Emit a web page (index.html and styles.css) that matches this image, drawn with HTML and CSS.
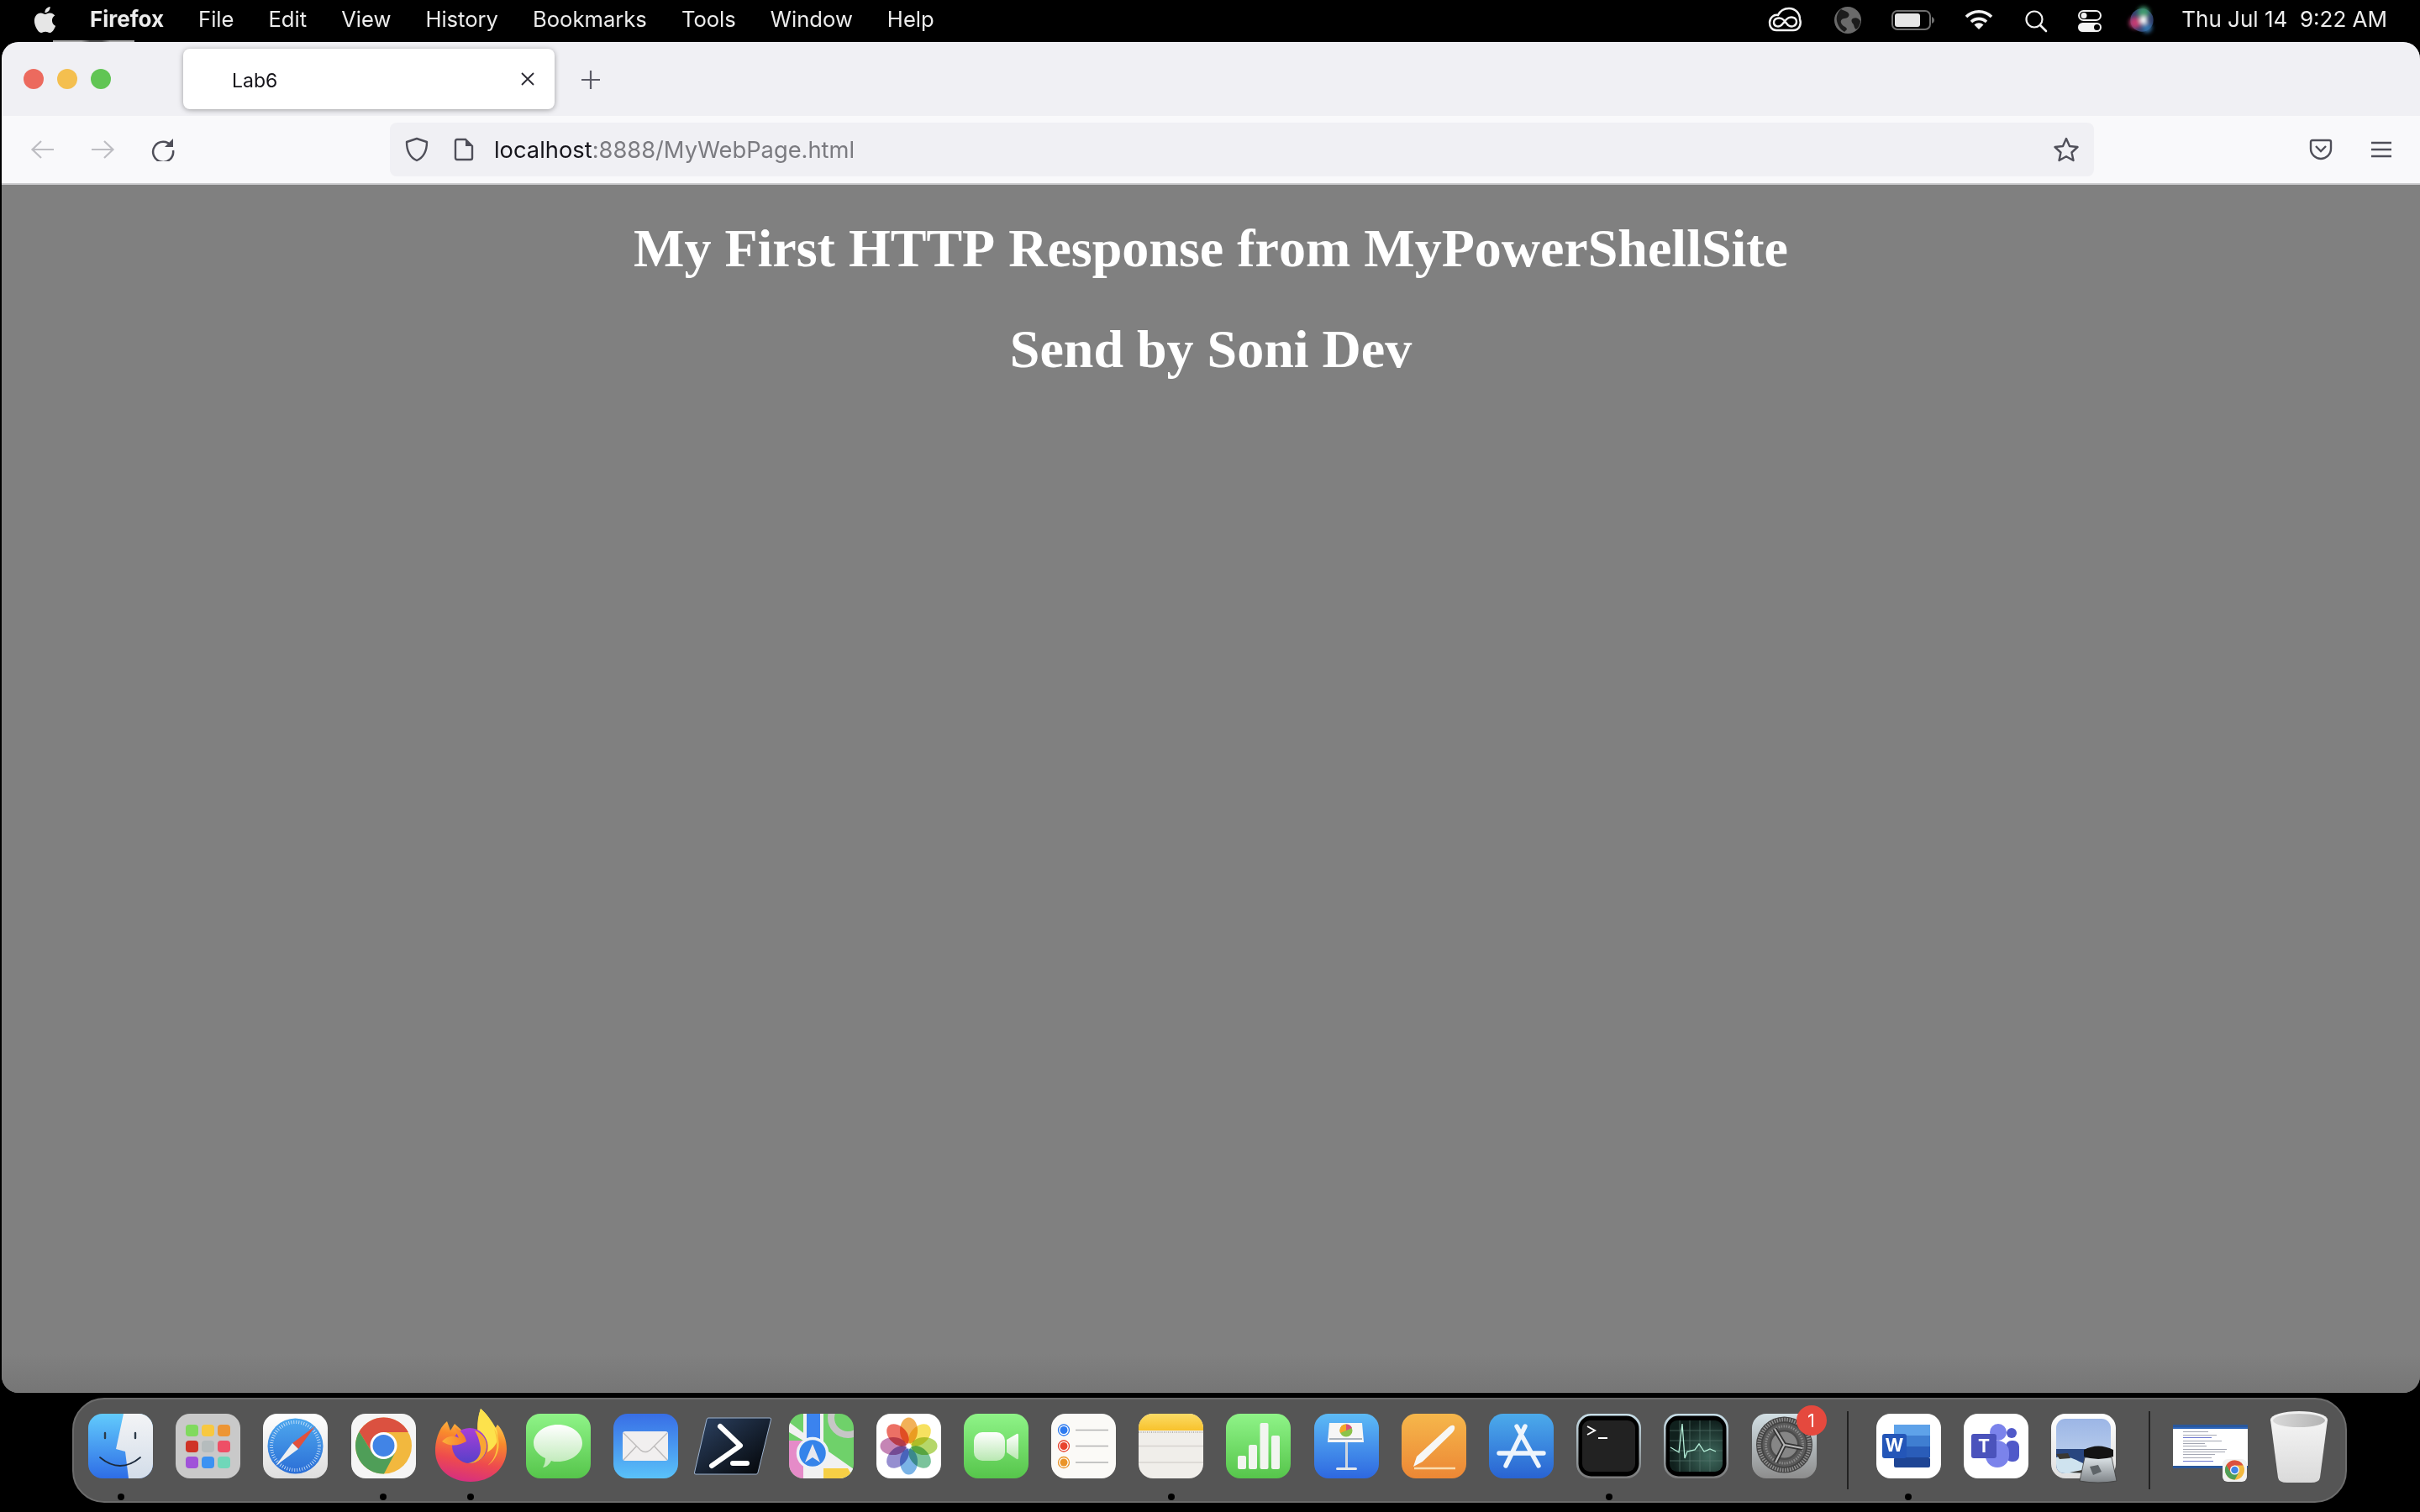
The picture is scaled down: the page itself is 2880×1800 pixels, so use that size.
FILE: index.html
```html
<!DOCTYPE html>
<html lang="en">
<head>
  <meta charset="UTF-8">
  <title>Lab6</title>
  <link rel="stylesheet" href="styles.css">
</head>
<body>

<!-- shared gradients and clip for the dock icons -->
<svg class="svg-defs" aria-hidden="true">
  <defs>
    <clipPath id="sq"><rect width="77" height="77" rx="17"/></clipPath>
    <linearGradient id="gFinderL" x1="0" y1="0" x2="0" y2="1"><stop offset="0" stop-color="#62cbfc"/><stop offset="1" stop-color="#2e6de6"/></linearGradient>
    <linearGradient id="gFinderR" x1="0" y1="0" x2="0" y2="1"><stop offset="0" stop-color="#f3f4f6"/><stop offset="1" stop-color="#d3dde9"/></linearGradient>
    <linearGradient id="gWhite" x1="0" y1="0" x2="0" y2="1"><stop offset="0" stop-color="#ffffff"/><stop offset="1" stop-color="#dedede"/></linearGradient>
    <linearGradient id="gSafari" x1="0" y1="0" x2="0" y2="1"><stop offset="0" stop-color="#4ea8ee"/><stop offset="1" stop-color="#2b6ed6"/></linearGradient>
    <linearGradient id="gGreen" x1="0" y1="0" x2="0" y2="1"><stop offset="0" stop-color="#8ff488"/><stop offset="1" stop-color="#56c54b"/></linearGradient>
    <linearGradient id="gBubble" x1="0" y1="0" x2="0" y2="1"><stop offset="0" stop-color="#ffffff"/><stop offset="1" stop-color="#b9e8b2"/></linearGradient>
    <linearGradient id="gMail" x1="0" y1="0" x2="0" y2="1"><stop offset="0" stop-color="#386ee6"/><stop offset="1" stop-color="#5ac2f9"/></linearGradient>
    <linearGradient id="gPs" x1="0" y1="0" x2="1" y2="1"><stop offset="0" stop-color="#2d4364"/><stop offset="1" stop-color="#020304"/></linearGradient>
    <linearGradient id="gKeynote" x1="0" y1="0" x2="0" y2="1"><stop offset="0" stop-color="#5dbbf6"/><stop offset="1" stop-color="#2e68e0"/></linearGradient>
    <linearGradient id="gPages" x1="0" y1="0" x2="0" y2="1"><stop offset="0" stop-color="#f6b74b"/><stop offset="1" stop-color="#ec8735"/></linearGradient>
    <linearGradient id="gStore" x1="0" y1="0" x2="0" y2="1"><stop offset="0" stop-color="#4cabeb"/><stop offset="1" stop-color="#2963d2"/></linearGradient>
    <linearGradient id="gFrame" x1="0" y1="0" x2="0" y2="1"><stop offset="0" stop-color="#c8dfe9"/><stop offset="1" stop-color="#7a7a7a"/></linearGradient>
    <linearGradient id="gPrefs" x1="0" y1="0" x2="0" y2="1"><stop offset="0" stop-color="#d2dfe4"/><stop offset="1" stop-color="#8d8d8d"/></linearGradient>
    <linearGradient id="gNotes" x1="0" y1="0" x2="0" y2="1"><stop offset="0" stop-color="#fbdc66"/><stop offset="1" stop-color="#f8c22c"/></linearGradient>
    <linearGradient id="gSky" x1="0" y1="0" x2="0" y2="1"><stop offset="0" stop-color="#9cb6e6"/><stop offset="1" stop-color="#c4d6ee"/></linearGradient>
    <linearGradient id="gTrash" x1="0" y1="0" x2="0" y2="1"><stop offset="0" stop-color="#f4f4f4"/><stop offset="1" stop-color="#dadada"/></linearGradient>
    <linearGradient id="gTrashIn" x1="0" y1="0" x2="1" y2="0"><stop offset="0" stop-color="#d8d8d8"/><stop offset="1" stop-color="#b4b4b4"/></linearGradient>
    <linearGradient id="gFox" x1="0.6" y1="0" x2="0.4" y2="1"><stop offset="0" stop-color="#fff05a"/><stop offset="0.4" stop-color="#f98a2c"/><stop offset="0.72" stop-color="#ee4a4e"/><stop offset="1" stop-color="#d62f80"/></linearGradient>
    <linearGradient id="gBall" x1="0" y1="0" x2="0" y2="1"><stop offset="0" stop-color="#a93fd8"/><stop offset="1" stop-color="#5740c9"/></linearGradient>
    <linearGradient id="gWing" x1="0" y1="0" x2="1" y2="0"><stop offset="0" stop-color="#fbb13a"/><stop offset="1" stop-color="#f67b2b"/></linearGradient>
    <linearGradient id="gGlass" x1="0" y1="0" x2="0" y2="1"><stop offset="0" stop-color="#dde4e8"/><stop offset="1" stop-color="#7f8488"/></linearGradient>
    <radialGradient id="gScreen" cx="0.75" cy="0.7" r="0.7"><stop offset="0" stop-color="#3f6a5e"/><stop offset="1" stop-color="#10201d"/></radialGradient>
    <filter id="soft" x="-30%" y="-30%" width="160%" height="160%"><feGaussianBlur stdDeviation="2.4"/></filter>
  </defs>
</svg>

<header class="menubar">
  <svg class="apple" viewBox="0 0 24 24"><path d="M12.152 6.896c-.948 0-2.415-1.078-3.96-1.04-2.04.027-3.91 1.183-4.961 3.014-2.117 3.675-.546 9.103 1.519 12.09 1.013 1.454 2.208 3.09 3.792 3.039 1.52-.065 2.09-.987 3.935-.987 1.831 0 2.35.987 3.96.948 1.637-.026 2.676-1.48 3.676-2.948 1.156-1.688 1.636-3.325 1.662-3.415-.039-.013-3.182-1.221-3.22-4.857-.026-3.04 2.48-4.494 2.597-4.559-1.429-2.09-3.623-2.324-4.39-2.376-2-.156-3.675 1.09-4.61 1.09zM15.53 3.83c.843-1.012 1.4-2.427 1.245-3.83-1.207.052-2.662.805-3.532 1.818-.78.896-1.454 2.338-1.273 3.714 1.338.104 2.715-.688 3.559-1.701"/></svg>
  <nav class="menu">
    <span class="menu-app">Firefox</span>
    <span>File</span>
    <span>Edit</span>
    <span>View</span>
    <span>History</span>
    <span>Bookmarks</span>
    <span>Tools</span>
    <span>Window</span>
    <span>Help</span>
  </nav>
  <div class="status">
    <svg class="status-icons" viewBox="0 0 470 50">
      <!-- creative cloud -->
      <g fill="none" stroke="#f2f2f2" stroke-width="2.4">
        <path d="M15 36C9 36 7 31 7 27 7 21 12 17 17 18 20 12 25 10 30 10 38 10 43 16 43 23 45 28 43 36 35 36Z"/>
        <path d="M12 27C12 21 20 20 24 24L29 30C33 33 39 31 39 26 39 20 31 19 27 23L21 30C17 33 12 31 12 27Z"/>
      </g>
      <!-- globe -->
      <circle cx="100" cy="24" r="16" fill="#6a6a6a"/>
      <path d="M92 11c4 2 7 2 9 5s-2 6-5 6-6 3-3 7 5 2 6 6l-3 3c-5-3-8-8-9-13s1-11 5-14zM106 22c4-2 7 0 9 3 0 4-2 8-5 10-3-2-2-5-4-7s-2-5 0-6z" fill="#1c1c1c"/>
      <!-- battery -->
      <rect x="153" y="13" width="45" height="22" rx="6" fill="none" stroke="#6f6f6f" stroke-width="2"/>
      <rect x="156" y="16" width="30" height="16" rx="3" fill="#e6e6e6"/>
      <path d="M200 20c2 1 3 2 3 4s-1 3-3 4z" fill="#6f6f6f"/>
      <!-- wifi -->
      <g fill="none" stroke="#f2f2f2" stroke-width="3.6">
        <path d="M241 20A21 21 0 0 1 271 20"/>
        <path d="M247 26A13 13 0 0 1 265 26"/>
      </g>
      <path d="M250.500 29.500A8 8 0 0 1 261.500 29.500L256 35Z" fill="#f2f2f2"/>
      <!-- search -->
      <circle cx="322" cy="23" r="9.500" fill="none" stroke="#f2f2f2" stroke-width="2.200"/>
      <path d="M329 30L336 37" stroke="#f2f2f2" stroke-width="2.600" stroke-linecap="round"/>
      <!-- control centre -->
      <rect x="375" y="13" width="26" height="11" rx="5.500" fill="none" stroke="#f2f2f2" stroke-width="2"/>
      <circle cx="381" cy="18.500" r="3.500" fill="#f2f2f2"/>
      <rect x="374" y="27" width="28" height="11" rx="5.500" fill="#f2f2f2"/>
      <circle cx="396.500" cy="32.500" r="3.500" fill="#000"/>
      <!-- siri -->
      <circle cx="450" cy="24" r="13.700" fill="#2f3f6b"/>
      <g filter="url(#soft)">
        <circle cx="452" cy="15" r="7" fill="#3f9a70"/>
        <circle cx="442" cy="27" r="7" fill="#c23a72"/>
        <circle cx="456" cy="33" r="6" fill="#3574ad"/>
        <circle cx="452" cy="24" r="4.500" fill="#ffffff"/>
      </g>
    </svg>
    <span class="clock">Thu Jul 14&nbsp; 9:22 AM</span>
  </div>
  <div class="sliver"></div>
</header>

<main class="window">
  <div class="tabbar">
    <div class="lights">
      <span class="light light-red"></span>
      <span class="light light-yellow"></span>
      <span class="light light-green"></span>
    </div>
    <div class="tab">
      <span class="tab-title">Lab6</span>
      <svg class="tab-close" viewBox="0 0 18 18"><path d="M2 2L16 16M16 2L2 16" stroke="#2b2a33" stroke-width="1.800"/></svg>
    </div>
    <svg class="tab-new" viewBox="0 0 24 24"><path d="M12 1V23M1 12H23" stroke="#5b5b66" stroke-width="2.200"/></svg>
  </div>

  <div class="toolbar">
    <svg class="nav-btn" viewBox="0 0 29 24"><path d="M28 12H3M13 2L2.500 12 13 22" fill="none" stroke="#bdbdc2" stroke-width="2.200"/></svg>
    <svg class="nav-btn" viewBox="0 0 29 24"><path d="M1 12H26M16 2L26.500 12 16 22" fill="none" stroke="#bdbdc2" stroke-width="2.200"/></svg>
    <svg class="nav-btn nav-reload" viewBox="0 0 29 28"><path d="M24 10A12 12 0 1 0 26 15" fill="none" stroke="#4f4f59" stroke-width="2.500"/><path d="M26 1V11H16Z" fill="#4f4f59"/></svg>
    <div class="urlbar">
      <svg class="url-shield" viewBox="0 0 28 30"><path d="M14 2L26 6C26 16 23 24 14 28 5 24 2 16 2 6Z" fill="none" stroke="#4f4f59" stroke-width="2.400" stroke-linejoin="round"/></svg>
      <svg class="url-page" viewBox="0 0 24 28"><path d="M4 2H14L22 10V24Q22 26 20 26H4Q2 26 2 24V4Q2 2 4 2Z" fill="none" stroke="#4f4f59" stroke-width="2.400"/><path d="M14 2V10H22Z" fill="#4f4f59"/></svg>
      <span class="url-text">localhost<span class="url-rest">:8888/MyWebPage.html</span></span>
      <svg class="url-star" viewBox="0 0 32 32"><path d="M16 3L20 12 29.500 13 22.500 19.500 24.500 29 16 24.200 7.500 29 9.500 19.500 2.500 13 12 12Z" fill="none" stroke="#4f4f59" stroke-width="2.400" stroke-linejoin="round"/></svg>
    </div>
    <div class="tools">
      <svg class="tool-pocket" viewBox="0 0 28 26"><path d="M4 2H24Q26 2 26 4V12C26 19 20 24 14 24S2 19 2 12V4Q2 2 4 2Z" fill="none" stroke="#4f4f59" stroke-width="2.400"/><path d="M8 9L14 15 20 9" fill="none" stroke="#4f4f59" stroke-width="2.400"/></svg>
      <svg class="tool-menu" viewBox="0 0 24 20"><path d="M0 2H24M0 10H24M0 18H24" stroke="#4f4f59" stroke-width="2.400"/></svg>
    </div>
  </div>

  <div class="page">
    <h1>My First HTTP Response from MyPowerShellSite</h1>
    <h1>Send by Soni Dev</h1>
  </div>
</main>

<footer class="dock">
  <!-- finder -->
  <div class="dock-app running">
    <svg viewBox="0 0 77 77"><g clip-path="url(#sq)">
      <rect width="77" height="77" fill="url(#gFinderL)"/>
      <path d="M42 0H77V77H48L44 45 33 42Z" fill="url(#gFinderR)"/>
      <path d="M20 23V29M56 23V29" stroke="#2c3a48" stroke-width="2.400" stroke-linecap="round"/>
      <path d="M14 52Q38 72 62 52" fill="none" stroke="#1c2a3c" stroke-width="1.800" stroke-linecap="round"/>
    </g></svg>
  </div>
  <!-- launchpad -->
  <div class="dock-app">
    <svg viewBox="0 0 77 77">
      <rect width="77" height="77" rx="17" fill="#c9c9c9"/>
      <rect x="12" y="13" width="15" height="14" rx="4" fill="#80da5e"/>
      <rect x="31" y="13" width="15" height="14" rx="4" fill="#f8c840"/>
      <rect x="50" y="13" width="15" height="14" rx="4" fill="#ed9534"/>
      <rect x="12" y="32" width="15" height="14" rx="4" fill="#cf3326"/>
      <rect x="31" y="32" width="15" height="14" rx="4" fill="#b5bcbd"/>
      <rect x="50" y="32" width="15" height="14" rx="4" fill="#ee4f66"/>
      <rect x="12" y="51" width="15" height="14" rx="4" fill="#a052d9"/>
      <rect x="31" y="51" width="15" height="14" rx="4" fill="#3b92f2"/>
      <rect x="50" y="51" width="15" height="14" rx="4" fill="#6fd7b9"/>
    </svg>
  </div>
  <!-- safari -->
  <div class="dock-app">
    <svg viewBox="0 0 77 77">
      <rect width="77" height="77" rx="17" fill="url(#gWhite)"/>
      <circle cx="38.500" cy="38.500" r="33" fill="url(#gSafari)"/>
      <circle cx="38.500" cy="38.500" r="28.500" fill="none" stroke="#d5e8fa" stroke-width="4" stroke-dasharray="0.800 2.200"/>
      <path d="M62 15L35 35 42 42Z" fill="#e2513d"/>
      <path d="M15 62L35 35 42 42Z" fill="#f0f0f0"/>
    </svg>
  </div>
  <!-- chrome -->
  <div class="dock-app running">
    <svg viewBox="0 0 77 77">
      <rect width="77" height="77" rx="17" fill="#f5f5f5"/>
      <circle cx="38.500" cy="38" r="33.500" fill="#f2b83e"/>
      <path d="M38.500 22H67.900A33.500 33.500 0 0 0 9.500 21.250L24.600 46Z" fill="#db5140"/>
      <path d="M9.500 21.250A33.500 33.500 0 0 0 39 71.500L52.400 46H24.600Z" fill="#4f9e58"/>
      <circle cx="38.500" cy="38" r="16" fill="#fff"/>
      <circle cx="38.500" cy="38" r="13" fill="#4184e6"/>
    </svg>
  </div>
  <!-- firefox -->
  <div class="dock-app running">
    <svg viewBox="0 0 77 77">
      <path d="M-4 44C-4 34-1 18 10 9L14 20 19 12 30 22C36 19 42 20 46 19 46 10 47 2 50-6 57 0 63 8 67 18L70 13C77 20 81 32 81 42 81 65 62 81 38 81 14 81-4 66-4 44Z" fill="url(#gFox)"/>
      <path d="M50-6C47 4 46 12 47 20 56 26 61 34 58 46 68 40 74 30 68 17 63 8 57 0 50-6Z" fill="#fde24c"/>
      <path d="M66 18C75 30 74 52 58 62 70 52 72 36 66 18Z" fill="#fbc23d"/>
      <circle cx="37" cy="38" r="21" fill="url(#gBall)"/>
      <path d="M4 33C10 26 18 25 24 29 22 24 20 20 19 16 26 20 32 26 33 33 24 38 14 40 4 33Z" fill="url(#gWing)"/>
      <path d="M43 20C52 23 58 31 57 40 56 52 46 60 35 59 48 57 52 46 49 36 48 30 46 25 43 20Z" fill="#f9a533"/>
    </svg>
  </div>
  <!-- messages -->
  <div class="dock-app">
    <svg viewBox="0 0 77 77">
      <rect width="77" height="77" rx="17" fill="url(#gGreen)"/>
      <path d="M38 13C54 13 67 23 67 35 67 47 54 57 38 57 35 57 32 57 30 56 28 60 24 64 20 64 22 61 23 57 23 53 15 49 9 43 9 35 9 23 22 13 38 13Z" fill="url(#gBubble)"/>
    </svg>
  </div>
  <!-- mail -->
  <div class="dock-app">
    <svg viewBox="0 0 77 77">
      <rect width="77" height="77" rx="17" fill="url(#gMail)"/>
      <rect x="11" y="21" width="54" height="35" rx="3" fill="#f1efef"/>
      <path d="M12 23L32 43Q38 48 44 43L64 23M12 55L28 38M64 55L48 38" fill="none" stroke="#bdbbbb" stroke-width="1.400"/>
    </svg>
  </div>
  <!-- powershell -->
  <div class="dock-app">
    <svg viewBox="0 0 77 77">
      <path d="M9 5H82Q84 5 83.500 7L68 70Q67.500 72 66 72H-6Q-8 72-7.500 70L7 7Q7.500 5 9 5Z" fill="url(#gPs)" stroke="#9db3cf"/>
      <path d="M23 15L47 38 13 62" fill="none" stroke="#fff" stroke-width="6" stroke-linecap="round" stroke-linejoin="round"/>
      <path d="M38 59H55" stroke="#fff" stroke-width="6" stroke-linecap="round"/>
    </svg>
  </div>
  <!-- maps -->
  <div class="dock-app">
    <svg viewBox="0 0 77 77"><g clip-path="url(#sq)">
      <rect width="77" height="77" fill="#6fd16a"/>
      <path d="M0 10L40 40 77 66V77H17V32L0 22Z" fill="#f1f1f1"/>
      <rect x="0" y="32" width="17" height="45" fill="#e58bc8"/>
      <path d="M41 65H70L77 77H41Z" fill="#f6cf45"/>
      <rect x="17" width="24" height="77" fill="#f1f1f1"/>
      <rect x="21" width="16" height="45" fill="#3b83ee"/>
      <circle cx="70" cy="5" r="20" fill="none" stroke="#c6c6c6" stroke-width="8"/>
      <circle cx="28" cy="47" r="17.500" fill="#3584ea" stroke="#edf2f7" stroke-width="3.500"/>
      <path d="M28 36L37 58 28 52 19 58Z" fill="#e8e8ee"/>
    </g></svg>
  </div>
  <!-- photos -->
  <div class="dock-app">
    <svg viewBox="0 0 77 77">
      <rect width="77" height="77" rx="17" fill="#fff"/>
      <g class="petals">
        <ellipse cx="38.500" cy="20" rx="10.500" ry="15.500" fill="#f0a33a"/>
        <ellipse cx="38.500" cy="20" rx="10.500" ry="15.500" fill="#f6dc44" transform="rotate(45 38.500 38.500)"/>
        <ellipse cx="38.500" cy="20" rx="10.500" ry="15.500" fill="#a8d04e" transform="rotate(90 38.500 38.500)"/>
        <ellipse cx="38.500" cy="20" rx="10.500" ry="15.500" fill="#62b98a" transform="rotate(135 38.500 38.500)"/>
        <ellipse cx="38.500" cy="20" rx="10.500" ry="15.500" fill="#63a6e2" transform="rotate(180 38.500 38.500)"/>
        <ellipse cx="38.500" cy="20" rx="10.500" ry="15.500" fill="#837ac8" transform="rotate(225 38.500 38.500)"/>
        <ellipse cx="38.500" cy="20" rx="10.500" ry="15.500" fill="#bb6fa8" transform="rotate(270 38.500 38.500)"/>
        <ellipse cx="38.500" cy="20" rx="10.500" ry="15.500" fill="#e9574a" transform="rotate(315 38.500 38.500)"/>
      </g>
    </svg>
  </div>
  <!-- facetime -->
  <div class="dock-app">
    <svg viewBox="0 0 77 77">
      <rect width="77" height="77" rx="17" fill="url(#gGreen)"/>
      <rect x="12" y="22" width="37" height="34" rx="10" fill="url(#gBubble)"/>
      <path d="M51 31L63 24Q65 23 65 26V52Q65 55 63 54L51 46Z" fill="url(#gBubble)"/>
    </svg>
  </div>
  <!-- reminders -->
  <div class="dock-app">
    <svg viewBox="0 0 77 77">
      <rect width="77" height="77" rx="17" fill="#fbfaf7"/>
      <circle cx="15" cy="19.500" r="6.500" fill="#fff" stroke="#2f7cf0" stroke-width="1.300"/><circle cx="15" cy="19.500" r="4.500" fill="#2f7cf0"/>
      <circle cx="15" cy="38.500" r="6.500" fill="#fff" stroke="#e8432f" stroke-width="1.300"/><circle cx="15" cy="38.500" r="4.500" fill="#e8432f"/>
      <circle cx="15" cy="58" r="6.500" fill="#fff" stroke="#ea9428" stroke-width="1.300"/><circle cx="15" cy="58" r="4.500" fill="#ea9428"/>
      <path d="M29 19.500H68M29 38.500H68M29 58H68" stroke="#b4b4b4" stroke-width="1.600"/>
    </svg>
  </div>
  <!-- notes -->
  <div class="dock-app running">
    <svg viewBox="0 0 77 77"><g clip-path="url(#sq)">
      <rect width="77" height="77" fill="#f0eeea"/>
      <rect width="77" height="20" fill="url(#gNotes)"/>
      <path d="M0 22H77" stroke="#b9b7b2" stroke-width="2" stroke-dasharray="1 1.500"/>
      <path d="M0 38.500H77M0 58H77" stroke="#d6d4d0" stroke-width="1.400"/>
    </g></svg>
  </div>
  <!-- numbers -->
  <div class="dock-app">
    <svg viewBox="0 0 77 77">
      <rect width="77" height="77" rx="17" fill="url(#gGreen)"/>
      <g fill="#f2f5f0">
        <rect x="14" y="50" width="10" height="16" rx="2"/>
        <rect x="27" y="37" width="10" height="29" rx="2"/>
        <rect x="40.500" y="11" width="10" height="55" rx="2"/>
        <rect x="54" y="26" width="10" height="40" rx="2"/>
      </g>
    </svg>
  </div>
  <!-- keynote -->
  <div class="dock-app">
    <svg viewBox="0 0 77 77">
      <rect width="77" height="77" rx="17" fill="url(#gKeynote)"/>
      <rect x="37" y="33" width="3" height="31" fill="#cfd6de"/>
      <rect x="26" y="64" width="25" height="3" rx="1.500" fill="#e4e8ec"/>
      <path d="M18 11H57L59 34H16Z" fill="#f6f6f6"/>
      <rect x="18" y="29" width="39" height="2" fill="#aab2bc"/>
      <circle cx="38" cy="20" r="7.500" fill="#8bc34a"/>
      <path d="M38 20V12.500A7.500 7.500 0 0 0 31 23Z" fill="#f4a62a"/>
      <path d="M38 20V12.500A7.500 7.500 0 0 1 45 17Z" fill="#d84f7c"/>
    </svg>
  </div>
  <!-- pages -->
  <div class="dock-app">
    <svg viewBox="0 0 77 77">
      <rect width="77" height="77" rx="17" fill="url(#gPages)"/>
      <path d="M14 63L18 51 56 16Q61 12 63 15 64 19 60 23L25 57Z" fill="#f7f7f5"/>
      <path d="M15 65H64" stroke="#f9dcae" stroke-width="2.400"/>
    </svg>
  </div>
  <!-- app store -->
  <div class="dock-app">
    <svg viewBox="0 0 77 77">
      <rect width="77" height="77" rx="17" fill="url(#gStore)"/>
      <path d="M33 15L59 62M43 15L20 62M12 47H65" stroke="#eef5fc" stroke-width="5.400" stroke-linecap="round"/>
    </svg>
  </div>
  <!-- terminal -->
  <div class="dock-app running">
    <svg viewBox="0 0 77 77">
      <rect width="77" height="77" rx="17" fill="url(#gFrame)"/>
      <rect x="2.500" y="2.500" width="72" height="72" rx="15" fill="#000"/>
      <rect x="7" y="8" width="63" height="61" rx="9" fill="#222"/>
      <path d="M13 15L22 20 13 25" fill="none" stroke="#fff" stroke-width="2"/>
      <path d="M26 29H37" stroke="#fff" stroke-width="2"/>
    </svg>
  </div>
  <!-- activity monitor -->
  <div class="dock-app">
    <svg viewBox="0 0 77 77">
      <rect width="77" height="77" rx="17" fill="url(#gFrame)"/>
      <rect x="2.500" y="2.500" width="72" height="72" rx="15" fill="#000"/>
      <rect x="7" y="8" width="63" height="61" rx="9" fill="url(#gScreen)"/>
      <path d="M7 20H70M7 32H70M7 44H70M7 56H70M19 8V69M31 8V69M43 8V69M55 8V69" stroke="#54736b" stroke-width="0.700"/>
      <path d="M8 40L18 46 22 12 25 53 28 45 37 43 42 36 48 45 55 42 62 45" fill="none" stroke="#b4eed8" stroke-width="1.300"/>
    </svg>
  </div>
  <!-- system preferences -->
  <div class="dock-app">
    <svg viewBox="0 0 77 77">
      <rect width="77" height="77" rx="17" fill="url(#gPrefs)"/>
      <circle cx="38.500" cy="37" r="33.500" fill="#444"/>
      <circle cx="38.500" cy="37" r="30" fill="none" stroke="#8f8f8f" stroke-width="4.500" stroke-dasharray="1.500 1.500"/>
      <circle cx="38.500" cy="37" r="26" fill="#5a5a5a"/>
      <circle cx="38.500" cy="37" r="22" fill="none" stroke="#8a8a8a" stroke-width="3" stroke-dasharray="1.500 1.500"/>
      <circle cx="38.500" cy="37" r="18" fill="#4c4c4c"/>
      <circle cx="38.500" cy="37" r="15.500" fill="#868686"/>
      <path d="M38.500 37L27 18M38.500 37L60 41M38.500 37L28 58" stroke="#333" stroke-width="5.500"/>
      <path d="M38.500 37L27 18M38.500 37L60 41M38.500 37L28 58" stroke="#b8b8b8" stroke-width="2"/>
    </svg>
    <span class="badge">1</span>
  </div>

  <span class="dock-sep dock-sep-apps"></span>

  <!-- word -->
  <div class="dock-app running">
    <svg viewBox="0 0 77 77">
      <rect width="77" height="77" rx="17" fill="#fff"/>
      <rect x="21" y="13" width="43" height="13" fill="#5ea2e9"/>
      <rect x="21" y="26" width="43" height="13" fill="#3f7ed1"/>
      <rect x="21" y="39" width="43" height="13" fill="#2a5db9"/>
      <rect x="21" y="52" width="43" height="12" rx="2" fill="#1e4595"/>
      <rect x="7" y="24" width="29" height="29" rx="3" fill="#2456b8"/>
      <text class="icon-letter" x="21.500" y="45" text-anchor="middle">W</text>
    </svg>
  </div>
  <!-- teams -->
  <div class="dock-app">
    <svg viewBox="0 0 77 77">
      <rect width="77" height="77" rx="17" fill="#fff"/>
      <circle cx="57" cy="23" r="6" fill="#5059c9"/>
      <rect x="50" y="32" width="16" height="25" rx="7" fill="#5059c9"/>
      <circle cx="41" cy="22" r="10" fill="#7b83eb"/>
      <rect x="26" y="32" width="28" height="32" rx="14" fill="#7b83eb"/>
      <rect x="9" y="24" width="30" height="29" rx="3" fill="#4b53bc"/>
      <text class="icon-letter" x="24" y="46" text-anchor="middle">T</text>
    </svg>
  </div>
  <!-- preview -->
  <div class="dock-app">
    <svg viewBox="0 0 77 77">
      <rect width="77" height="77" rx="17" fill="url(#gWhite)"/>
      <rect x="6" y="6" width="65" height="65" rx="11" fill="url(#gSky)"/>
      <path d="M6 42H71V60Q71 71 60 71H17Q6 71 6 60Z" fill="#29467f"/>
      <path d="M6 52C18 48 28 54 40 60L50 71H17Q6 71 6 60Z" fill="#cfe3ef"/>
      <path d="M6 48L20 47 23 53 10 54ZM22 70L42 66 48 71Z" fill="#3b3833"/>
      <path d="M34 80L40 52H72L78 80Q56 84 34 80Z" fill="url(#gGlass)" stroke="#3c3c3c" stroke-width="0.800"/>
      <path d="M46 63L56 61 60 69 50 73Z" fill="#5e6468"/>
      <path d="M39 51V43Q56 34 74 43V51Q56 57 39 51Z" fill="#141414"/>
    </svg>
  </div>

  <span class="dock-sep dock-sep-docs"></span>

  <!-- minimised window -->
  <div class="dock-app dock-app-thumb">
    <svg viewBox="0 0 89 77">
      <rect y="13" width="89" height="52" fill="#fff"/>
      <rect y="13" width="89" height="3" fill="#2a579a"/>
      <rect y="16" width="89" height="2" fill="#2b64b8"/>
      <rect y="62" width="89" height="3" fill="#2a579a"/>
      <g fill="#a5a8b4">
        <rect x="12" y="21" width="30" height="1"/><rect x="12" y="25" width="40" height="1"/>
        <rect x="12" y="28" width="34" height="1" fill="#6d78d0"/><rect x="12" y="32" width="46" height="1"/>
        <rect x="12" y="35" width="26" height="1"/><rect x="12" y="38" width="28" height="1"/>
        <rect x="12" y="42" width="52" height="1"/><rect x="12" y="45" width="50" height="1"/>
        <rect x="12" y="48" width="38" height="1"/><rect x="12" y="52" width="34" height="1"/>
        <rect x="12" y="56" width="36" height="1" fill="#6d78d0"/>
      </g>
      <rect x="59" y="54" width="29" height="27" rx="6" fill="#f2f2f2"/>
      <circle cx="73.500" cy="67" r="11.500" fill="#f2b83e"/>
      <path d="M73.500 61.500H83.500A11.500 11.500 0 0 0 63.500 61.300L68.700 70Z" fill="#db5140"/>
      <path d="M63.500 61.300A11.500 11.500 0 0 0 73.700 78.500L78.300 70H68.700Z" fill="#4f9e58"/>
      <circle cx="73.500" cy="67" r="5.500" fill="#fff"/>
      <circle cx="73.500" cy="67" r="4.300" fill="#4184e6"/>
    </svg>
  </div>
  <!-- trash -->
  <div class="dock-app dock-app-trash">
    <svg viewBox="0 0 68 77">
      <path d="M0 7L9 76Q10 82 20 82H48Q58 82 59 76L68 7Z" fill="url(#gTrash)"/>
      <ellipse cx="34" cy="7" rx="34" ry="10" fill="#f0f0f0"/>
      <ellipse cx="34" cy="8" rx="31" ry="8" fill="url(#gTrashIn)"/>
    </svg>
  </div>
</footer>

</body>
</html>
```

FILE: styles.css
```css
* {
  box-sizing: border-box;
}

html, body {
  margin: 0;
  height: 100%;
}

body {
  width: 2880px;
  height: 1800px;
  overflow: hidden;
  background: #000;
  font-family: "Inter", "Liberation Sans", sans-serif;
  display: flex;
  flex-direction: column;
}

.svg-defs {
  position: absolute;
  width: 0;
  height: 0;
}

/* menu bar */
.menubar {
  position: relative;
  height: 50px;
  flex: none;
  display: flex;
  align-items: center;
  padding: 0 39px 0 38px;
  color: #ececec;
  font-size: 26px;
}

.apple {
  width: 31px;
  height: 31px;
  margin-top: -4px;
  fill: #e6e6e6;
}

.menu {
  display: flex;
  gap: 41px;
  margin: -5px 0 0 38px;
  font-size: 25.6px;
}

.menu-app {
  font-weight: 700;
  font-size: 26px;
}

.status {
  margin-left: auto;
  display: flex;
  align-items: center;
  gap: 27px;
}

.status-icons {
  width: 470px;
  height: 50px;
}

.clock {
  margin-top: -5px;
}

.sliver {
  position: absolute;
  left: 63px;
  top: 48px;
  width: 97px;
  height: 2px;
  background: linear-gradient(90deg, #a9a9a9 35%, #555 45%, #555 60%, #a9a9a9 70%);
}

/* browser window */
.window {
  flex: none;
  height: 1608px;
  margin-left: 2px;
  display: flex;
  flex-direction: column;
  border-radius: 20px;
  overflow: hidden;
  background: #808080;
}

.tabbar {
  height: 88px;
  flex: none;
  background: #f0f0f4;
  display: flex;
  align-items: flex-start;
  padding: 8px 0 0 25.5px;
}

.lights {
  display: flex;
  gap: 16px;
  margin-top: 24px;
}

.light {
  width: 24px;
  height: 24px;
  border-radius: 50%;
}

.light-red { background: #ec6a5e; }
.light-yellow { background: #f4bf4f; }
.light-green { background: #61c554; }

.tab {
  width: 442px;
  height: 72px;
  margin-left: 86.5px;
  padding: 3px 23px 0 58px;
  display: flex;
  align-items: center;
  justify-content: space-between;
  background: #fff;
  border-radius: 8px;
  box-shadow: 0 1px 6px rgba(0, 0, 0, 0.35);
}

.tab-title {
  font-size: 23px;
  color: #15141a;
}

.tab-close {
  width: 18px;
  height: 18px;
  margin-top: -3px;
}

.tab-new {
  width: 24px;
  height: 24px;
  margin: 25px 0 0 31px;
}

.toolbar {
  height: 80px;
  flex: none;
  display: flex;
  align-items: center;
  padding: 0 34px;
  background: #f9f9fb;
  border-bottom: 0;
}

.nav-btn {
  width: 29px;
  height: 24px;
  margin-right: 43px;
}

.nav-reload {
  height: 28px;
  margin-right: 0;
}

.urlbar {
  width: 2028px;
  height: 64px;
  margin-left: 255px;
  padding: 0 17px 0 18px;
  display: flex;
  align-items: center;
  background: #f0f0f4;
  border-radius: 8px;
}

.url-shield {
  width: 28px;
  height: 30px;
}

.url-page {
  width: 24px;
  height: 28px;
  margin-left: 30px;
}

.url-text {
  margin-left: 24px;
  font-size: 27.3px;
  color: #15141a;
}

.url-rest {
  color: #7b7b80;
}

.url-star {
  width: 32px;
  height: 32px;
  margin-left: auto;
}

.tools {
  margin-left: auto;
  display: flex;
  align-items: center;
  gap: 46px;
}

.tool-pocket {
  width: 28px;
  height: 26px;
}

.tool-menu {
  width: 24px;
  height: 20px;
}

.page {
  flex: 1;
  padding-top: 39px;
  border-top: 2px solid #ccccce;
  border-bottom: 1px solid #8b8b8b;
  background: linear-gradient(#808080 calc(100% - 45px), #767676);
  text-align: center;
  color: #fff;
  font-family: "Liberation Serif", serif;
}

.page h1 {
  margin: 0 0 46px;
  font-size: 64px;
  line-height: 74px;
  font-weight: 700;
  font-kerning: none;
}

/* dock */
.dock {
  flex: none;
  width: 2707px;
  height: 125px;
  margin: 6px 0 0 86px;
  padding: 17px 0 0 17px;
  display: flex;
  align-items: flex-start;
  gap: 27.2px;
  background: #555;
  border: 2px solid #6c6c6c;
  border-radius: 38px;
}

.dock-app {
  position: relative;
  width: 77px;
  height: 77px;
  flex: none;
}

.dock-app svg {
  display: block;
  width: 100%;
  height: 100%;
  overflow: visible;
}

.dock-app-thumb {
  width: 89px;
}

.dock-app-trash {
  width: 68px;
}

.running::after {
  content: "";
  position: absolute;
  left: 34.5px;
  top: 95px;
  width: 8px;
  height: 8px;
  border-radius: 50%;
  background: #000;
}

.badge {
  position: absolute;
  left: 53px;
  top: -10px;
  width: 36px;
  height: 36px;
  border-radius: 50%;
  background: #e5493e;
  color: #fff;
  font-size: 22px;
  line-height: 36px;
  text-align: center;
}

.dock-sep {
  flex: none;
  width: 2px;
  height: 93px;
  margin-top: -3px;
  background: #222;
}

.dock-sep-apps {
  margin-left: 9px;
  margin-right: 6px;
}

.dock-sep-docs {
  margin-left: 11px;
}

.petals ellipse {
  opacity: 0.85;
  mix-blend-mode: multiply;
}

.icon-letter {
  font-family: "Inter", "Liberation Sans", sans-serif;
  font-size: 21px;
  font-weight: 700;
  fill: #fff;
}
```
